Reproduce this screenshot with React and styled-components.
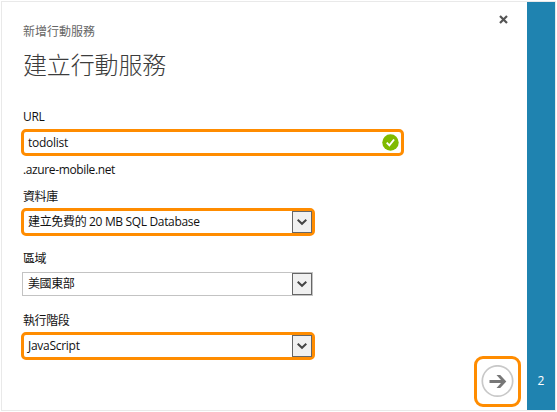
import React from 'react';
import styled, { createGlobalStyle } from 'styled-components';

const GlobalStyle = createGlobalStyle`
  * { box-sizing: border-box; }
  body {
    margin: 0;
    background: #fff;
    font-family: "Open Sans", "Noto Sans CJK TC", sans-serif;
    font-size: 12px;
    color: #111;
  }
`;

const Dialog = styled.div`
  display: flex;
  width: 555px;
  height: 410px;
  margin: 1px;
  border: 1px solid #e9e9e9;
  background: #fff;
`;

const Content = styled.main`
  display: flex;
  flex: 1;
  justify-content: space-between;
  padding-left: 19px;
`;

const Form = styled.form`
  display: flex;
  flex-direction: column;
  align-items: flex-start;
  padding-top: 20px;
`;

const Eyebrow = styled.div`
  height: 20px;
  margin-left: 2px;
  line-height: 20px;
  color: #666;
`;

const Title = styled.h1`
  height: 36px;
  margin: 5px 0 25px 2px;
  font-size: 24px;
  font-weight: 300;
  line-height: 36px;
  letter-spacing: -0.15px;
  color: #3c3c3c;
`;

const Label = styled.label`
  height: 18px;
  margin: ${(p) => p.$gap || 0}px 0 ${(p) => p.$after ?? 3}px 2px;
  line-height: 18px;
  letter-spacing: ${(p) => p.$spacing || 0}px;
`;

const Field = styled.div`
  display: flex;
  align-items: center;
  justify-content: space-between;
  width: ${(p) => p.$width}px;
  height: ${(p) => p.$height}px;
  margin-left: ${(p) => (p.$plain ? 1 : 0)}px;
  padding: 0 ${(p) => (p.$plain ? 0 : p.$inset || 0)}px 0 ${(p) => (p.$plain ? 5 : 4)}px;
  border: ${(p) => (p.$plain ? '1px solid #c3c3c3' : '3px solid #ff8c00')};
  border-radius: ${(p) => (p.$plain ? 0 : 5)}px;
`;

const Value = styled.span`
  line-height: 20px;
  white-space: nowrap;
  letter-spacing: ${(p) => p.$spacing || 0}px;
`;

const DropButton = styled.span`
  display: flex;
  align-items: center;
  justify-content: center;
  width: 20px;
  height: 22px;
  border: 1px solid #666;
  background: #f0f0f0;
`;

const Actions = styled.aside`
  display: flex;
  flex-direction: column;
  align-items: flex-end;
  justify-content: space-between;
  padding: 13px 6px 3px 0;
`;

const CloseButton = styled.span`
  display: flex;
  margin-right: 13px;
`;

const NextButton = styled.span`
  display: flex;
  align-items: center;
  justify-content: center;
  width: 47px;
  height: 51px;
  border: 3px solid #ff8c00;
  border-radius: 9px;
`;

const StepBar = styled.nav`
  display: flex;
  align-items: flex-end;
  justify-content: center;
  width: 28px;
  padding-bottom: 19px;
  background: #1f83b0;
  color: #fff;
  line-height: 20px;
`;

function Chevron() {
  return (
    <svg width="10" height="8" viewBox="0 0 10 8">
      <path d="M0.7 1.8 L5 5.8 L9.3 1.8" fill="none" stroke="#444" strokeWidth="2" />
    </svg>
  );
}

function Select({ text, spacing, plain }) {
  return (
    <Field $width={plain ? 291 : 294} $height={plain ? 24 : 28} $plain={plain}>
      <Value $spacing={spacing}>{text}</Value>
      <DropButton><Chevron /></DropButton>
    </Field>
  );
}

export default function App() {
  return (
    <>
      <GlobalStyle />
      <Dialog>
        <Content>
          <Form>
            <Eyebrow>新增行動服務</Eyebrow>
            <Title>建立行動服務</Title>
            <Label $spacing={-0.3}>URL</Label>
            <Field $width={383} $height={27} $inset={2}>
              <Value $spacing={-0.25}>todolist</Value>
              <svg width="17" height="17" viewBox="0 0 18 18">
                <circle cx="9" cy="9" r="8.7" fill="#7fba00" />
                <path d="M5 9.2 L7.8 12 L12.8 5.8" fill="none" stroke="#fff" strokeWidth="2" />
              </svg>
            </Field>
            <Label as="span" $gap={5} $after={0} $spacing={-0.37}>.azure-mobile.net</Label>
            <Label $gap={9} $after={2} $spacing={-0.4}>資料庫</Label>
            <Select text="建立免費的 20 MB SQL Database" spacing={-0.34} />
            <Label $gap={14} $after={4} $spacing={-0.4}>區域</Label>
            <Select text="美國東部" spacing={-0.4} plain />
            <Label $gap={16} $after={2} $spacing={-0.4}>執行階段</Label>
            <Select text="JavaScript" spacing={-0.28} />
          </Form>
          <Actions>
            <CloseButton>
              <svg width="9" height="9" viewBox="0 0 9 9">
                <path d="M1 1 L8 8 M8 1 L1 8" fill="none" stroke="#555" strokeWidth="2.2" />
              </svg>
            </CloseButton>
            <NextButton>
              <svg width="33" height="33" viewBox="0 0 33 33">
                <circle cx="16.5" cy="16" r="15.2" fill="none" stroke="#c8c8c8" strokeWidth="1.7" />
                <path d="M8.5 16.5 H22.5" fill="none" stroke="#777" strokeWidth="3" />
                <path d="M15.5 10 H19.2 L25.3 16.5 L19.2 23 H15.5 L21.3 16.5 Z" fill="#777" />
              </svg>
            </NextButton>
          </Actions>
        </Content>
        <StepBar>2</StepBar>
      </Dialog>
    </>
  );
}
